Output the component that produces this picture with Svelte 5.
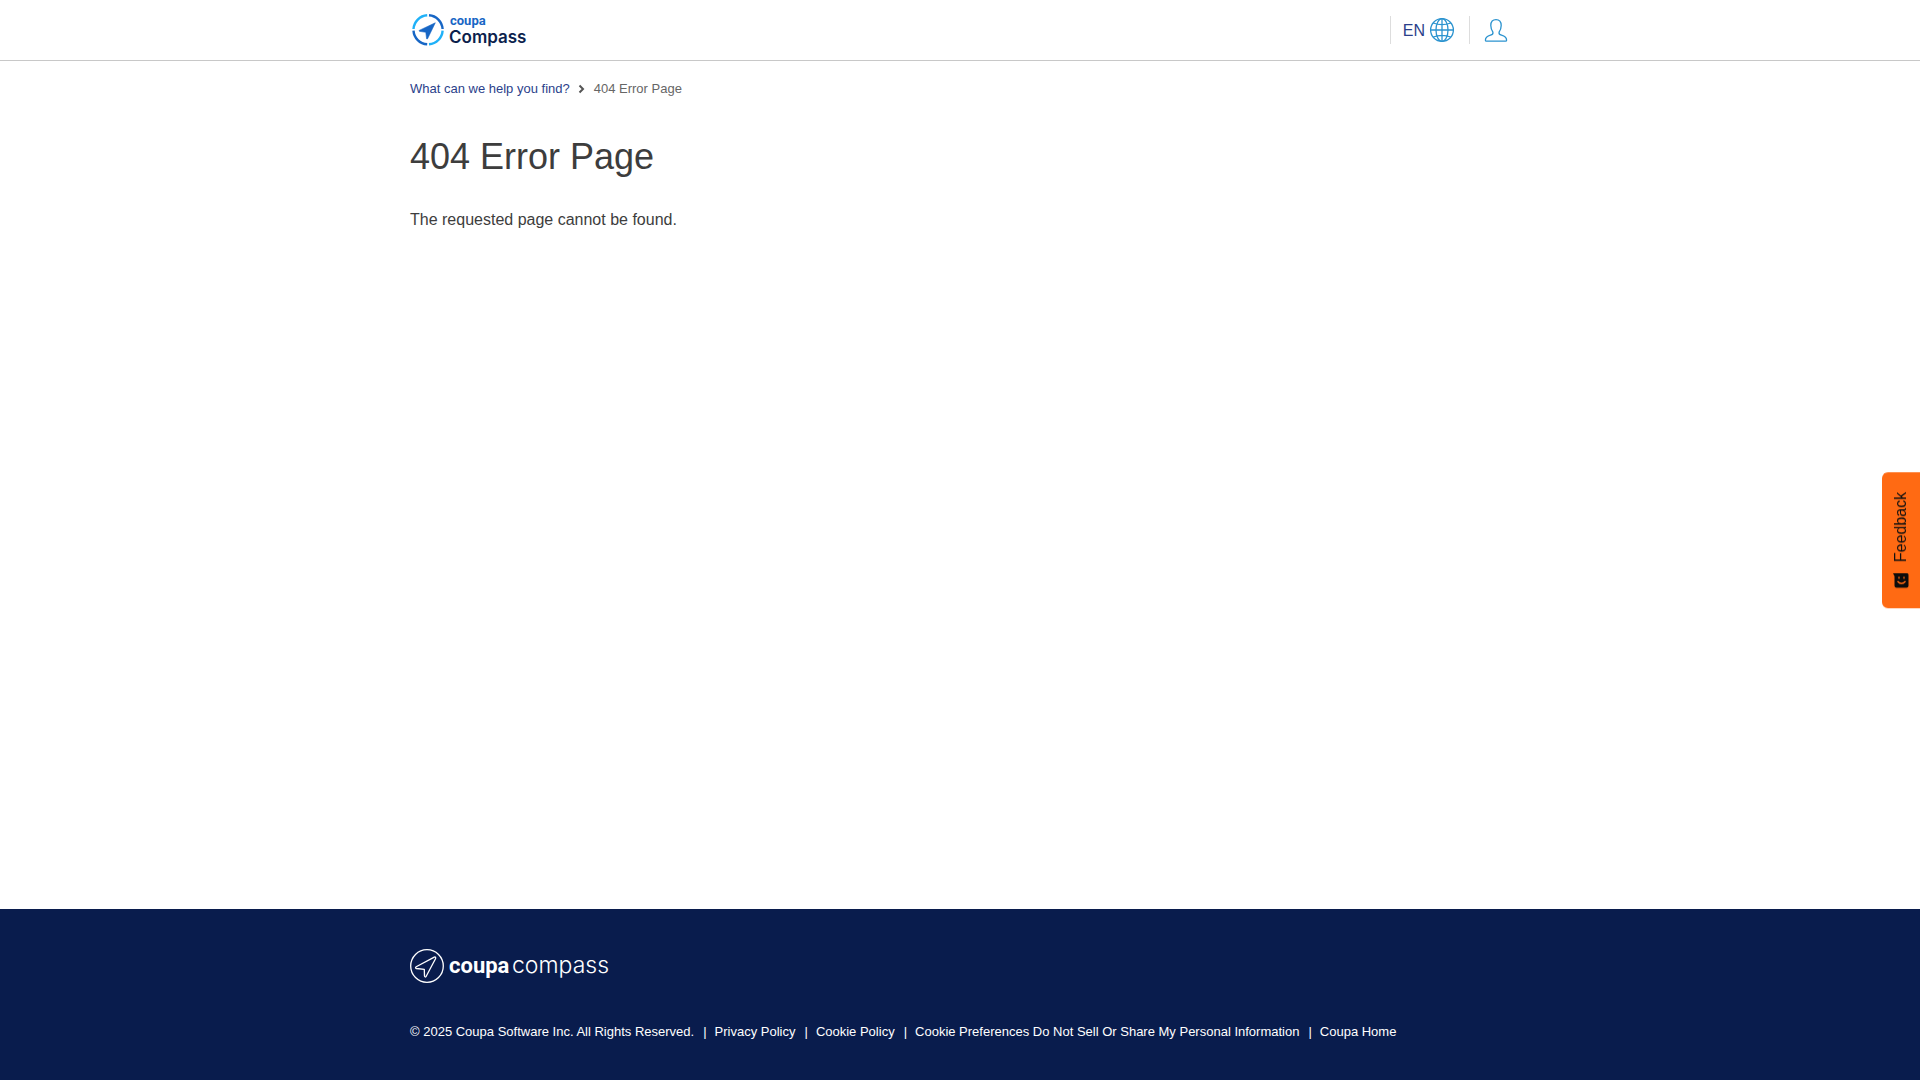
<script>
  const links = ['Privacy Policy', 'Cookie Policy', 'Cookie Preferences Do Not Sell Or Share My Personal Information', 'Coupa Home'];
</script>

<div class="page">
  <header>
    <div class="wrap bar">
      <a class="brand" href="#home" aria-label="Coupa Compass">
        <svg width="120" height="40" viewBox="0 0 120 40">
          <g fill="none" stroke-width="2.4">
            <path d="M19 5.300A14.600 14.600 0 0 1 32.600 19" stroke="#1766c5" />
            <path d="M32.600 20.600A14.600 14.600 0 0 1 19 34.300" stroke="#1fb1f8" />
            <path d="M17.200 34.300A14.600 14.600 0 0 1 3.500 20.600" stroke="#1766c5" />
            <path d="M3.500 19A14.600 14.600 0 0 1 17.200 5.300" stroke="#1fb1f8" />
          </g>
          <path d="M25.300 12.800 9.200 20.400Q8.800 21 9.400 21.300L15.800 22.300 16.600 28.800Q17 29.400 17.600 28.700Z" fill="#1766c5" stroke="#1766c5" stroke-width="0.600" />
          <text class="mark" x="40" y="15">coupa</text>
          <text class="product" x="39" y="33">Compass</text>
        </svg>
      </a>
      <nav aria-label="Account">
        <button class="language">
          <span>EN</span>
          <svg width="26" height="26" viewBox="0 0 26 26" fill="none" stroke="#2b93cf" stroke-width="1.300">
            <circle cx="13" cy="13" r="11.400" />
            <ellipse cx="13" cy="13" rx="6" ry="11.400" />
            <path d="M13 1.600v22.800M1.600 13h22.800M4.200 6q8.800 3.400 17.600 0M4.200 20q8.800-3.400 17.600 0" />
          </svg>
        </button>
        <button class="account" aria-label="Account">
          <svg width="24" height="26" viewBox="0 0 24 26" fill="none" stroke="#2b93cf" stroke-width="1.300" stroke-linejoin="round">
            <path d="M8.900 15.100Q6.800 12 6.800 8.500C6.800 4.500 8.800 2.600 12 2.600S17.200 4.500 17.200 8.500Q17.200 12 15.100 15.100C14.600 17 15.500 17.600 17.500 18.200 21 19.200 22.600 20.300 22.600 23.200Q22.600 24.200 21.500 24.200H2.500Q1.400 24.200 1.400 23.200C1.400 20.300 3 19.200 6.500 18.200 8.500 17.600 9.400 17 8.900 15.100Z" />
          </svg>
        </button>
      </nav>
    </div>
  </header>

  <main class="wrap">
    <nav class="crumbs" aria-label="Breadcrumb">
      <a href="#home">What can we help you find?</a>
      <svg width="8" height="10" viewBox="0 0 8 10" fill="none" stroke="#555" stroke-width="2"><path d="M1.500 1.500 5 5 1.500 8.500" /></svg>
      <span>404 Error Page</span>
    </nav>
    <h1>404 Error Page</h1>
    <p>The requested page cannot be found.</p>
  </main>

  <footer>
    <div class="wrap">
      <a class="brand" href="#home" aria-label="Coupa Compass">
        <svg width="200" height="36" viewBox="0 0 200 36">
          <g fill="none" stroke="#fff" stroke-width="1.300" stroke-linejoin="round">
            <circle cx="17" cy="18" r="16.300" />
            <path d="M24.300 9.100 6.200 18.700C5 19.600 5.500 20.300 6.500 20.500L14.300 21.300 14.500 28C14.700 29.300 15.500 29.200 16.200 28.300L25.500 10.700C26 9.500 25.500 8.600 24.300 9.100Z" />
          </g>
          <text class="foot-mark" x="39" y="25">coupa</text>
          <text class="foot-product" x="102" y="25">compass</text>
        </svg>
      </a>
      <div class="legal">
        <span>© 2025 Coupa Software Inc. All Rights Reserved.</span>
        {#each links as link}
          <span class="separator">|</span>
          <a href="#legal">{link}</a>
        {/each}
      </div>
    </div>
  </footer>

  <button class="feedback">
    <svg width="16" height="16" viewBox="0 0 16 16">
      <path d="M0 1H13.500Q15.500 1 15.500 2.500V13.500Q15.500 15.500 13.500 15.500H3.500Q1.500 15.500 1.500 13.500V4Z" fill="#0c0c0c" />
      <path d="M6 4.500v2M11 4.500v2M4.500 9q4 4.500 8 0" fill="none" stroke="#ff6a13" stroke-width="1.300" />
    </svg>
    <span>Feedback</span>
  </button>
</div>

<style>
  :global(body) { margin: 0; }
  .page {
    min-height: 100vh;
    display: flex;
    flex-direction: column;
    font: 16px/24px "Liberation Sans", Arial, sans-serif;
    color: #3d3d3d;
    background: #fff;
  }
  .wrap { width: 100%; max-width: 1100px; margin: 0 auto; }
  a { color: inherit; text-decoration: none; }
  button { border: 0; background: none; font: inherit; color: inherit; cursor: pointer; padding: 0; }
  svg { display: block; flex: none; }
  header { border-bottom: 1px solid #c8c8c8; }
  .bar { height: 60px; display: flex; align-items: center; justify-content: space-between; }
  .bar nav { display: flex; align-items: center; }
  .bar button { height: 28px; display: flex; align-items: center; border-left: 1px solid #ddd; }
  .language { color: #2b3f8b; gap: 4px; padding: 0 14px 0 12px; }
  .language span { padding-top: 2px; }
  .account { padding: 0 2px 0 14px; }
  .mark { font: 700 13px Roboto, sans-serif; fill: #1766c5; }
  .product { font: 600 17px Inter, sans-serif; fill: #0c1f4d; }
  main { flex: 1; }
  .crumbs { display: flex; align-items: center; gap: 8px; margin-top: 16px; font-size: 13px; color: #666; }
  .crumbs a { color: #2b3f8b; }
  h1 { margin: 28px 0 0; font-size: 36px; line-height: 56px; font-weight: 400; }
  p { margin: 23px 0 0; }
  footer { background: #091c4d; color: #fff; padding: 39px 0 36px; font-size: 13px; }
  footer .brand { display: inline-block; vertical-align: top; }
  .foot-mark { font: 700 22px Roboto, sans-serif; fill: #fff; }
  .foot-product { font: 300 23px Inter, sans-serif; fill: #fff; }
  .legal { display: flex; flex-wrap: wrap; margin-top: 36px; }
  .separator { padding: 0 8px 0 9px; }
  .feedback {
    position: fixed;
    right: 0;
    top: 472px;
    writing-mode: vertical-rl;
    transform: rotate(180deg);
    display: flex;
    align-items: center;
    gap: 10px;
    width: 38px;
    padding: 20px 0;
    border-radius: 0 6px 6px 0;
    background: #ff6a13;
    color: #111;
  }
  .feedback svg { transform: rotate(180deg); }
</style>
